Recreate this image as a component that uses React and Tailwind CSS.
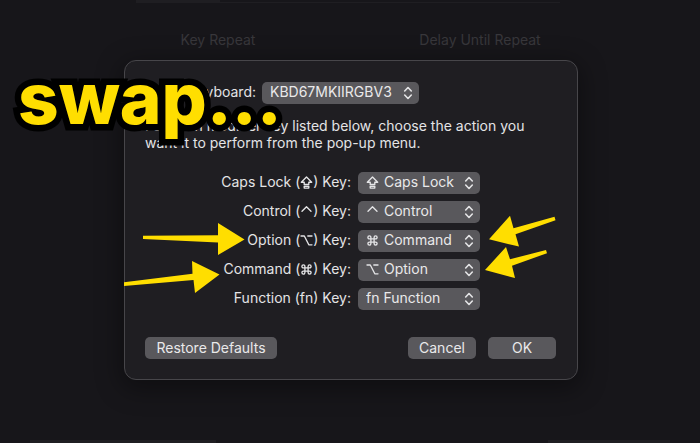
const keys = [
    { id: 'caps', name: 'Caps Lock', glyph: '⇪', value: 'caps' },
    { id: 'control', name: 'Control', glyph: '^', value: 'control' },
    { id: 'option', name: 'Option', glyph: '⌥', value: 'command' },
    { id: 'command', name: 'Command', glyph: '⌘', value: 'option' },
    { id: 'function', name: 'Function', glyph: 'fn', value: 'function' },
]

const glyphs = {
    '⇪': (
        <>
            <path d="M6.5 1 1.3 6.2h2.9v2.2h4.6V6.2h2.9z" />
            <path d="M4.2 10.2h4.6v1.9H4.2z" />
        </>
    ),
    '^': <path d="m2 6.2 4.5-4.4L11 6.2" />,
    '⌥': <path d="M1 2h3.3l4.5 8.8H12M7.8 2H12" />,
    '⌘': (
        <path d="M4.9 4.9h3.2v3.2H4.9zM4.9 4.9H3.4a1.5 1.5 0 1 1 1.5-1.5zM8.1 4.9V3.4a1.5 1.5 0 1 1 1.5 1.5zM8.1 8.1h1.5a1.5 1.5 0 1 1-1.5 1.5zM4.9 8.1v1.5a1.5 1.5 0 1 1-1.5-1.5z" />
    ),
}

const Glyph = ({ name }) =>
    glyphs[name] ? (
        <svg viewBox="0 0 13 13" className="w-[13px] h-[13px] shrink-0" fill="none" stroke="currentColor" strokeWidth="1.35" strokeLinejoin="round" strokeLinecap="round" role="img" aria-label={name}>
            {glyphs[name]}
        </svg>
    ) : (
        <span>{name}</span>
    )

const Popup = ({ id, value, glyph, className, children }) => (
    <div className={`relative h-[22px] ${className}`}>
        {glyph && (
            <span className="absolute left-2 top-0 h-5 flex items-center pointer-events-none">
                <Glyph name={glyph} />
            </span>
        )}
        <select
            id={id}
            defaultValue={value}
            className={`appearance-none block w-full h-full rounded-[5px] bg-[#59585c] pb-0.5 leading-5 text-[#e9e9ea] ${glyph ? 'pl-[26px]' : 'pl-2'}`}
        >
            {children}
        </select>
        <svg viewBox="0 0 10 14" className="absolute right-[6px] top-1 w-[10px] h-[14px] pointer-events-none" fill="none" stroke="#e4e4e6" strokeWidth="1.6" strokeLinecap="round" strokeLinejoin="round">
            <path d="m1.7 5 3.3-3.5L8.3 5M1.7 9 5 12.5 8.3 9" />
        </svg>
    </div>
)

const Button = ({ className = '', children }) => (
    <button type="button" className={`h-[22px] rounded-[5px] bg-[#59585c] leading-[22px] text-[#e9e9ea] ${className}`}>
        {children}
    </button>
)

const KeyRow = ({ id, name, glyph, value }) => {
    const selected = keys.find((k) => k.id === value)
    return (
        <>
            <label htmlFor={id} className="h-5 leading-5 flex items-center justify-end">
                <span className="whitespace-pre">{name} (</span>
                <Glyph name={glyph} />
                <span className="whitespace-pre">) Key:</span>
            </label>
            <Popup id={id} value={value} glyph={value === 'function' ? null : selected.glyph} className="w-[122px]">
                {keys.map((k) => (
                    <option key={k.id} value={k.id}>
                        {k.id === 'function' ? 'fn Function' : k.name}
                    </option>
                ))}
            </Popup>
        </>
    )
}

const ModifierDialog = () => (
    <form role="dialog" aria-label="Modifier Keys" className="w-full max-w-[454px] rounded-xl border border-[#47464a] bg-[#1f1e22] pl-5 pr-[21px] pt-[21px] pb-5 shadow-[0_6px_24px_4px_rgba(0,0,0,0.35)]">
        <div className="flex items-start gap-[6px]">
            <label htmlFor="keyboard" className="leading-5">Select keyboard:</label>
            <Popup id="keyboard" className="w-[157px]">
                <option>KBD67MKIIRGBV3</option>
            </Popup>
        </div>

        <p className="mt-[13px] -mr-1 leading-[17px]">
            For each modifier key listed below, choose the action you want it to perform from the pop-up menu.
        </p>

        <div className="mt-[21px] grid grid-cols-[206px_auto] justify-start gap-[7px]">
            {keys.map((k) => (
                <KeyRow key={k.id} {...k} />
            ))}
        </div>

        <div className="mt-[27px] flex gap-3">
            <Button className="w-[132px] mr-auto">Restore Defaults</Button>
            <Button className="w-[68px]">Cancel</Button>
            <Button className="w-[68px]">OK</Button>
        </div>
    </form>
)

// Hand-drawn notes on top of the dialog
const Annotations = () => (
    <div className="absolute inset-0 pointer-events-none">
        <svg viewBox="0 0 700 443" className="absolute left-0 top-0 w-[700px] h-[443px]" fill="#ffde00">
            <path d="M143 235.7 218 235.3V223l26.5 16.4L218 255v-12.6L143 239z" />
            <path d="m124 282.3 68.5-8.6L192 261l27.5 13.5L195 293l-1.5-13L124 286z" />
            <path d="m554.5 216.8-41 11.4-3.5-12.4-21 23.4 30 7.4-3.5-12.4 40-14z" />
            <path d="m546 250-36 9.3-4-12.3-21 23 30 8-3-12.3 35-12.5z" />
        </svg>
        <p className="absolute left-[18px] top-[55px] text-[71px] leading-[87px] font-extrabold text-[#ffde00] [-webkit-text-stroke:13px_black] [paint-order:stroke_fill] [stroke-linejoin:round]">
            swap...
        </p>
    </div>
)

const App = () => (
    <div className="relative min-h-screen overflow-hidden flex flex-col bg-[#17161a] font-['Inter','Liberation_Sans',sans-serif] text-[14px] text-[#e4e4e6]">
        <div className="ml-[136px] mr-[140px] h-[3px] border-b border-[#1f1e22]">
            <div className="h-[2px] w-[84px] bg-[#1f1e22]" />
        </div>
        <div className="mt-7 flex text-[#38373b] leading-[18px]">
            <span className="w-[436px] text-center">Key Repeat</span>
            <span className="w-[88px] flex justify-center whitespace-nowrap">Delay Until Repeat</span>
        </div>
        <main className="mt-[11px] pl-0.5 flex justify-center">
            <ModifierDialog />
        </main>
        <div className="mt-auto mx-[30px] flex justify-between">
            <div className="h-[3px] w-[186px] bg-[#1f1e22]" />
            <div className="h-[3px] w-[122px] bg-[#1f1e22]" />
        </div>
        <Annotations />
    </div>
)

export default App
